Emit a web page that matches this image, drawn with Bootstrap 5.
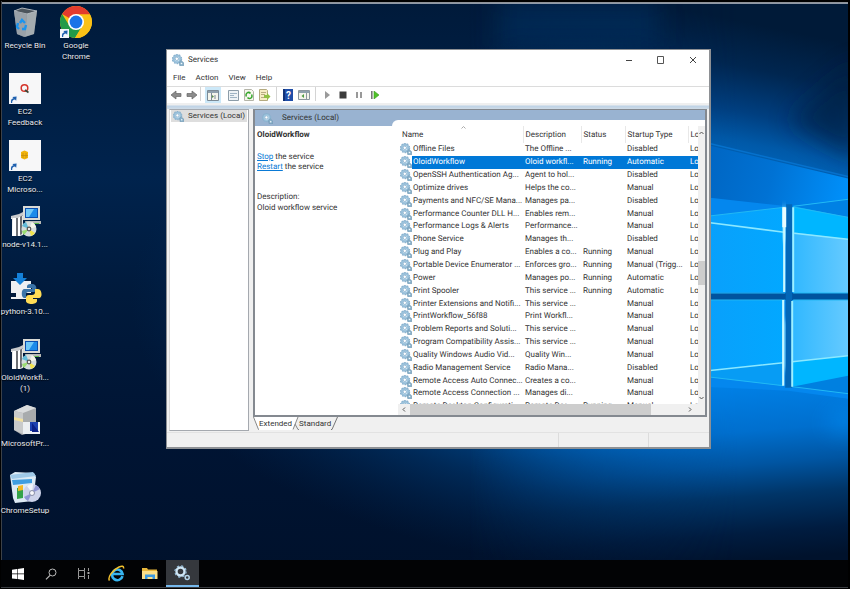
<!DOCTYPE html>
<html lang="en">
<head>
<meta charset="utf-8">
<meta name="viewport" content="width=device-width, initial-scale=1">
<title>Services</title>
<link rel="stylesheet" href="https://cdn.jsdelivr.net/npm/bootstrap@5.3.0/dist/css/bootstrap.min.css">
<style>
  html, body { height: 100%; }
  body { font-family: Roboto, "Open Sans", sans-serif; font-size: 8px; line-height: 12px; color: #333; background: #000; overflow: hidden; text-rendering: geometricPrecision; }
  svg { display: block; flex: none; }
  button { font: inherit; color: inherit; background: none; border: 0; padding: 0; }
  .screen { min-height: 100vh; border-style: solid; border-color: #000; border-width: 1px 2px 1px 1px; }
  .wallpaper { inset: 0; width: 100%; height: 100%; z-index: 0; }
  .desktop { z-index: 1; padding: 4px 0 24px; }
  .shortcut { width: 48px; flex: 1; display: flex; flex-direction: column; align-items: center; color: #e8ebf0; line-height: 11px; text-shadow: 0 1px 1px #000; text-align: center; white-space: nowrap; }
  .shortcut svg { width: 34px; height: 34px; margin-bottom: 1px; }
  .second { width: 54px; }
  .taskbar { background: #020305; height: 28px; border-bottom: 1px solid #3a3d42; z-index: 1; }
  .taskbar button { width: 33px; height: 27px; display: grid; place-items: center; }
  .taskbar button.running { background: #35383d; border-bottom: 2px solid #76b9ed; }
  .app { inset: 48px 137px 139px 165px; background: #f0f0f0; border: 1px solid #8d9094; border-width: 1px 2px 2px 1px; z-index: 2; }
  .titlebar { height: 20px; background: #fff; padding-left: 5px; }
  .titlebar .caption button { width: 32px; height: 20px; display: grid; place-items: center; }
  .menus { height: 16px; background: #fff; padding-left: 6px; gap: 10px; }
  .tools { height: 17px; background: #fff; border-top: 1px solid #dcdcdc; padding-left: 1px; }
  .tools button { height: 16px; width: 16px; display: grid; place-items: center; }
  .tools .on { background: #cce8f8; }
  .sep { width: 1px; height: 14px; background: #d4d4d4; margin: 0 3px; }
  .strip { height: 6px; background: linear-gradient(#efefef 0 2px, #bdd2e6 3px, #cfdbe6); }
  .body-area { padding: 0 2px 1px 2px; }
  .tree { width: 83px; background: #fff; border: 1px solid #a5a9af; border-left-color: #d8d8d8; padding: 0 1px; }
  .tree button { background: #dedede; height: 12px; padding: 0 2px; }
  .result { background: #fff; border: 1px solid #848990; border-width: 1px 2px 2px 2px; }
  .band { background: #99b3d1; height: 16px; }
  .band .title-cell { width: 137px; padding-left: 7px; gap: 9px; }
  .band .curve { background: #fff; margin-top: 10px; border-top-left-radius: 6px; }
  .detail { width: 143px; flex: none; padding: 3px 2px; line-height: 11px; }
  .detail a { color: #0a7ad6; text-decoration: underline; }
  .detail .actions { margin: 12px 0 19px; line-height: 10px; }
  .grid-wrap { overflow: hidden; padding-left: 2px; }
  .grid-table { table-layout: fixed; width: 100%; height: calc(100% + 9px); border-collapse: collapse; white-space: nowrap; line-height: 12px; }
  .grid-table th { font-weight: 400; height: 17px; padding: 0 2px; border-right: 1px solid #e8e8e8; position: relative; }
  .grid-table td { padding: 0 2px; overflow: hidden; }
  .grid-table td:last-child, .grid-table th:last-child { overflow: hidden; border-right: 0; }
  .grid-table td:first-child { padding: 0; }
  .grid-table td .lbl { flex: 1; padding-left: 1px; }
  .grid-table .picked td { background: #0078d7; color: #fff; }
  .grid-table .picked td:first-child { background: linear-gradient(90deg, #fff 12px, #0078d7 12px); }
  .sort { position: absolute; top: 0; left: 50%; }
  .c-name { width: 123px; } .c-desc { width: 58px; } .c-stat { width: 44px; } .c-start { width: 63px; }
  .bar-v { width: 11px; background: #f0f0f0; }
  .bar-v .thumb { height: 24px; background: #cdcdcd; }
  .above { flex: 125; } .below { flex: 109; }
  .bar-h { height: 11px; background: #f0f0f0; }
  .bar-h .thumb { flex: 238; background: #cdcdcd; } .bar-h .rest { flex: 34; }
  .views { height: 14px; }
  .views button { height: 13px; }
  .status { height: 15px; border-top: 1px solid #e2e2e2; }
  .status div { border-right: 1px solid #dcdcdc; width: 90px; }
  .status div:last-child { border: 0; width: 60px; }
  .shrink-y { min-height: 0; } .shrink-x { min-width: 0; }
</style>
</head>
<body>
<svg width="0" height="0" class="position-absolute" aria-hidden="true">
  <defs>
    <symbol id="gear" viewBox="0 0 12 12">
      <circle cx="5" cy="5" r="4.600" fill="none" stroke="#8fb6d2" stroke-width="1.200" stroke-dasharray="1.500 1.400"/>
      <circle cx="5" cy="5" r="3.300" fill="#e6f3fa" stroke="#9cc3dd" stroke-width="2"/>
      <circle cx="5" cy="5" r="4.300" fill="none" stroke="#7da6c4" stroke-width=".5"/>
      <circle cx="4.800" cy="4.800" r="1.700" fill="#fff" stroke="#6f9dc0" stroke-width=".7"/>
      <path d="M7.200 8.300L9 6.500l2.700 2.300v3H7.800z" fill="#8ab2cb" stroke="#6790ad" stroke-width=".6"/>
      <circle cx="9.500" cy="9.500" r=".8" fill="#f4f9fc"/>
    </symbol>
    <symbol id="installer" viewBox="0 0 34 34">
      <path d="M3 13h9l3-2v20l-3 1H4V15H3z" fill="#e5e5e5"/><path d="M5 14h3v18H4zM10 13l2-1v20h-2z" fill="#fff"/><path d="M8 14h2v18H8zM12 12l2-2v20l-2 1z" fill="#6d7075"/>
      <path d="M3 12l8-2 4-2v3l-5 3H3z" fill="#c7c9cc"/>
      <path d="M15 2h17v14H15z" fill="#d9dad5"/><path d="M17 4h13v10H17z" fill="#0a4fb0"/><path d="M18 5h11v8H18z" fill="#1b8bea"/><path d="M18 5h8l-5 8h-3z" fill="#6fc8f8"/>
      <path d="M17 17h16v3H18z" fill="#b8b9b5"/><path d="M24 19h7v1h-7z" fill="#58b848"/>
      <circle cx="21" cy="25" r="7.500" fill="#d5dcdc"/><path d="M21 25l-7-3a7.500 7.500 0 0 1 4-4z" fill="#62b9d8"/><path d="M21 25l3-7a7.500 7.500 0 0 1 4 5z" fill="#f4f4e8"/><path d="M21 25l6 4a7.500 7.500 0 0 1-4 3z" fill="#f1e34d"/><path d="M21 25l-5 6a7.500 7.500 0 0 1-2-4z" fill="#9bdc72"/>
      <circle cx="21" cy="25" r="2.400" fill="#555"/><circle cx="21" cy="25" r="1.200" fill="#eee"/>
    </symbol>
    <symbol id="linkarrow" viewBox="0 0 9 9"><path d="M0 0h9v9H0z" fill="#f3f6fa"/><path d="M2 8c-.4-3 .6-4.600 2.500-4.800L3.400 2 7.600 1.500 7.200 5.800 6 4.600C4 4.800 3 6 3.200 8z" fill="#1d5fae"/></symbol>
  </defs>
</svg>

<div class="screen position-relative d-flex flex-column">
  <svg class="wallpaper position-absolute" viewBox="0 0 850 589" preserveAspectRatio="none" aria-hidden="true">
    <defs>
      <linearGradient id="base" x1="0" y1="0" x2="0" y2="1"><stop offset="0" stop-color="#001a3a"/><stop offset=".3" stop-color="#00234d"/><stop offset=".5" stop-color="#001a3c"/><stop offset=".75" stop-color="#001433"/><stop offset="1" stop-color="#00112b"/></linearGradient>
      <radialGradient id="wide" gradientUnits="userSpaceOnUse" cx="0" cy="0" r="1" gradientTransform="translate(690 300) scale(560 275)"><stop offset="0" stop-color="#0089ec"/><stop offset=".4" stop-color="#0078da"/><stop offset=".55" stop-color="#0058a8" stop-opacity=".85"/><stop offset=".75" stop-color="#003a74" stop-opacity=".55"/><stop offset="1" stop-color="#002a58" stop-opacity="0"/></radialGradient>
      <linearGradient id="sky" gradientUnits="userSpaceOnUse" x1="790" y1="30" x2="760" y2="175"><stop offset="0" stop-color="#001a38"/><stop offset=".3" stop-color="#002650"/><stop offset=".6" stop-color="#003f80"/><stop offset=".8" stop-color="#0059a8"/><stop offset="1" stop-color="#0068c0"/></linearGradient>
      <linearGradient id="beam" gradientUnits="userSpaceOnUse" x1="700" y1="150" x2="850" y2="190"><stop offset="0" stop-color="#0064c0"/><stop offset=".5" stop-color="#0072d4"/><stop offset="1" stop-color="#0090fa"/></linearGradient>
      <linearGradient id="ground" gradientUnits="userSpaceOnUse" x1="760" y1="375" x2="775" y2="560"><stop offset="0" stop-color="#0083ea"/><stop offset=".3" stop-color="#006fce"/><stop offset=".48" stop-color="#0055a2"/><stop offset=".65" stop-color="#003568"/><stop offset=".85" stop-color="#001c40"/><stop offset="1" stop-color="#00122c"/></linearGradient>
      <linearGradient id="fadeX" gradientUnits="userSpaceOnUse" x1="470" y1="0" x2="740" y2="0"><stop offset="0" stop-color="#000"/><stop offset="1" stop-color="#fff"/></linearGradient>
      <mask id="edge" maskUnits="userSpaceOnUse" x="0" y="0" width="850" height="589"><path d="M0 0h850v589H0z" fill="url(#fadeX)"/></mask>
      <linearGradient id="paneR" x1="0" y1="0" x2="1" y2="0"><stop offset="0" stop-color="#30b8ff"/><stop offset="1" stop-color="#65caff"/></linearGradient>
      <linearGradient id="paneL" x1="0" y1="0" x2="1" y2="0"><stop offset="0" stop-color="#0a9ffb"/><stop offset="1" stop-color="#02a8ff"/></linearGradient>
      <filter id="soft" x="-40%" y="-40%" width="180%" height="180%"><feGaussianBlur stdDeviation="12"/></filter>
      <filter id="glow" x="-100%" y="-20%" width="300%" height="140%"><feGaussianBlur stdDeviation="3"/></filter>
    </defs>
    <path d="M0 0h850v589H0z" fill="url(#base)"/>
    <path d="M0 0h850v589H0z" fill="url(#wide)"/>
    <g mask="url(#edge)">
      <path d="M400 0h450v300H400z" fill="url(#sky)"/>
      <path d="M400 300h450v289H400z" fill="url(#ground)"/>
    </g>
    <path d="M860 60v100L790 120z" fill="#001c3c" opacity=".6" filter="url(#soft)"/>
    <path d="M500 0h160v45H500z" fill="#003064" opacity=".5" filter="url(#soft)"/>
    <path d="M690 140l160 38v160H690z" fill="url(#beam)"/>
    <path d="M690 138l160 38" stroke="#0a7fe0" stroke-width="1.500" opacity=".6"/>
    <path d="M680 194l110 12 60-7v200l-60-8-110-5z" fill="#0487ee"/>
    <path d="M700 217l86-10v85h-86zM700 300h85v86l-85-10z" fill="url(#paneL)"/>
    <path d="M795 206l55-7v94h-55zM794 300h56v94l-56-8z" fill="#00b6ff"/>
    <path d="M795 206l55-7v18z" fill="#0081e4"/><path d="M794 387l56-11v18z" fill="#0080e0"/>
    <path d="M795 232l55 7v54h-55zM794 300h56v56l-56 6z" fill="url(#paneR)"/>
    <path d="M700 372l85-9v23l-85-10z" fill="#079cf4"/>
    <path d="M680 293h170v7H680z" fill="#00539f"/><path d="M788 204h6v184h-7z" fill="#0367b8"/>
    <g fill="none" stroke="#8be8ff" stroke-width="1.600"><path d="M700 221l86 11M796 233l54 6M700 372l85-9M794 362l56-6"/></g>
    <g fill="none" stroke="#22b9f4"><path d="M700 217l86-10M795 206l55-7M700 376l85 10M794 387l56 7M711 293h76M711 300h76M795 293h55M795 300h55M796 207l54 10"/></g>
    <path d="M786 206v35M785 320v50" stroke="#9feeff" stroke-width="6" opacity=".7" filter="url(#glow)"/>
    <path d="M786 207v85M785 300v86" stroke="#c9f8ff" stroke-width="2.200"/><path d="M786 207v20" stroke="#e8fdff" stroke-width="4"/><path d="M795 207v85M794 301v86" stroke="#9df0ff" stroke-width="2"/>
    <path d="M855 395c0 20-20 25-30 28l30 12z" fill="#0096ff" opacity=".8" filter="url(#soft)"/>
    <path d="M0 0h850v2H0z" fill="#000"/><path d="M0 2h850" stroke="#bfc5cc" stroke-width="1.500"/>
    <path d="M.5 0v589" stroke="#3d4248"/>
  </svg>

  <main class="desktop d-flex flex-fill position-relative">
    <div class="d-flex flex-column">
      <button class="shortcut"><svg viewBox="0 0 34 34"><path d="M6 6l8-3 15 3-3 23-10 3-7-3z" fill="#7a8289"/><path d="M6 6l8-3 15 3-10 3z" fill="#4b545c" stroke="#c5ccd1" stroke-width=".8"/><path d="M6 6l13 3-2 23-8-3z" fill="#99a1a8"/><path d="M19 9l10-3-3 23-9 3z" fill="#b3b9be" opacity=".75"/><path d="M12 18l2-3 3 3M18 20l-1 4h-3M11 24l-2-2 1-4" fill="none" stroke="#1b94ee" stroke-width="2.400"/></svg>Recycle Bin</button>
      <button class="shortcut"><svg viewBox="0 0 34 34"><path d="M1 2h32v31H1z" fill="#f7f7f8"/><circle cx="16.500" cy="17" r="3.300" fill="none" stroke="#d4342a" stroke-width="1.500"/><path d="M17 19l3.500 2.500" stroke="#3a4a3a" stroke-width="1.600"/><use href="#linkarrow" x="1" y="24" width="9" height="9"/></svg>EC2<br>Feedback</button>
      <button class="shortcut"><svg viewBox="0 0 34 34"><path d="M1 2h32v31H1z" fill="#f7f7f8"/><path d="M13 14l3.500-1.500L20 14v6l-3.500 1.500L13 20z" fill="#f2b50c"/><path d="M15 15v5M18 15v5M13 17.500h7" stroke="#c78e08" stroke-width=".8"/><use href="#linkarrow" x="1" y="24" width="9" height="9"/></svg>EC2<br>Microso...</button>
      <button class="shortcut"><svg><use href="#installer"/></svg>node-v14.1...</button>
      <button class="shortcut"><svg viewBox="0 0 34 34"><path d="M3 10h20v12H3zM8 22h8v4h4v2H3v-2h5z" fill="#eef0f2"/><path d="M9 2h6v5h4l-7 7-7-7h4z" fill="#1480d8"/><path d="M24 13c-5 0-5 1-5 4h5v1h-8c-3 0-3 9 0 9h2v-4c0-1 1-2 2-2h6c3 0 4-8-2-8z" fill="#3a74a8"/><path d="M27 18v3c0 2-1 3-3 3h-3c-2 0-3 1-3 3v3c0 4 11 4 11 0v-2h-4v-1h6c4 0 3-9-1-9z" fill="#ffdc55"/></svg>python-3.10...</button>
      <button class="shortcut"><svg><use href="#installer"/></svg>OloidWorkfl...<br>(1)</button>
      <button class="shortcut"><svg viewBox="0 0 34 34"><path d="M6 8l13-6 9 3v23l-14 4-8-5z" fill="#a8abad"/><path d="M6 8l13-6 9 3-13 5z" fill="#dadcdd"/><path d="M6 8l9 2v21l-9-4z" fill="#c8cacb"/><path d="M6 14l9 2v3l-9-2z" fill="#f1e0a0"/><path d="M15 19h17v12H15z" fill="#eceff2"/><path d="M22 19h8v9h-8z" fill="#1c3faf"/><path d="M24 20l7 9h-7z" fill="#0a1f88"/></svg>MicrosoftPr...</button>
      <button class="shortcut"><svg viewBox="0 0 34 34"><path d="M2 5l5-3 19 1 2 4-3 24-18 2L5 28z" fill="#dceaf5"/><path d="M2 5l23-3 3 4-24 3z" fill="#9fc9e8"/><path d="M4 10l20-1v4L5 15z" fill="#3f9de0"/><path d="M9 18l6-1v11l-6 1z" fill="#35a34a"/><path d="M10 16l5-1v5l-5 1z" fill="#f3b823"/><circle cx="24" cy="23" r="9" fill="#cdd3ea"/><path d="M24 23l-8 4a9 9 0 0 0 4 4zM24 23l8-4a9 9 0 0 0-4-4z" fill="#8f95d4"/><path d="M24 23l-5-7a9 9 0 0 1 6-2z" fill="#f2f5fb"/><circle cx="24" cy="23" r="2.500" fill="#f8f8fb" stroke="#8a90a8"/></svg>ChromeSetup</button>
    </div>
    <div class="d-flex flex-column">
      <button class="shortcut second justify-content-start"><svg viewBox="0 0 34 34"><circle cx="17" cy="17" r="16" fill="#fbc116"/><path d="M17 17L3.100 9A16 16 0 0 1 31 9.500H17z" fill="#e33b2e"/><path d="M3.100 9A16 16 0 0 0 16 33l7.500-12.500L17 17 10 20z" fill="#229a48"/><path d="M17 9.500h14a16 16 0 0 1-15 23.500l7.500-12z" fill="#fbc116"/><circle cx="17" cy="17" r="8" fill="#fff"/><circle cx="17" cy="17" r="6.400" fill="#1a73e8"/><use href="#linkarrow" x="1" y="24" width="9" height="9"/></svg>Google<br>Chrome</button>
    </div>
  </main>

  <section class="app position-absolute d-flex flex-column" aria-label="Services">
    <header class="titlebar d-flex align-items-center">
      <svg width="12" height="12"><use href="#gear"/></svg><span class="ps-1 flex-fill">Services</span>
      <div class="caption d-flex">
        <button aria-label="Minimize"><svg width="8" height="8"><path d="M1 4.500h6" stroke="#444"/></svg></button>
        <button aria-label="Maximize"><svg width="8" height="8"><path d="M.5.5h6v7h-6z" fill="none" stroke="#555"/></svg></button>
        <button aria-label="Close"><svg width="8" height="8"><path d="M1 1l6 6M7 1L1 7" stroke="#444"/></svg></button>
      </div>
    </header>
    <nav class="menus d-flex align-items-center"><button>File</button><button>Action</button><button>View</button><button>Help</button></nav>
    <div class="tools d-flex align-items-start" role="toolbar">
      <button aria-label="Back"><svg width="12" height="10"><path d="M1 5l5-4v2.500h5v3H6V9z" fill="#8b8b8b" stroke="#666" stroke-width=".7"/></svg></button>
      <button aria-label="Forward"><svg width="12" height="10"><path d="M11 5L6 1v2.500H1v3h5V9z" fill="#8b8b8b" stroke="#666" stroke-width=".7"/></svg></button>
      <span class="sep mx-0"></span><span class="ps-1"></span>
      <button class="on" aria-label="Console tree"><svg width="12" height="11"><path d="M.5.5h11v10H.5z" fill="#f4f4ec" stroke="#7c8a95"/><path d="M1 1h10v2H1z" fill="#8fa0ad"/><path d="M4.500 3v7M8 5v4" stroke="#7c8a95"/><path d="M5 5l2 1.500L5 8z" fill="#5a8f4a"/></svg></button>
      <span class="ps-1"></span>
      <button aria-label="Properties"><svg width="11" height="11"><path d="M.5.5h10v10H.5z" fill="#eef3f6" stroke="#8c9ca8"/><path d="M2 3.500h7M2 5.500h4M2 7.500h7" stroke="#9fb4c4"/></svg></button>
      <button aria-label="Refresh"><svg width="10" height="12"><path d="M.5.500h7l2 2v9h-9z" fill="#f7f6ee" stroke="#b4b4a8"/><path d="M2.500 7.500a2.500 2.500 0 0 1 4-3M7.500 5.500a2.500 2.500 0 0 1-4 3" fill="none" stroke="#35a62c" stroke-width="1.500"/></svg></button>
      <button aria-label="Export"><svg width="12" height="12"><path d="M.5.5h7l1 1v10h-8z" fill="#f5edc4" stroke="#b4aa80"/><path d="M2 3.500h5M2 5.500h4M2 8.500h3" stroke="#b8ac80"/><path d="M5 6h3V4l3.500 3.500L8 11V9H5z" fill="#8fc043"/></svg></button>
      <span class="sep"></span>
      <button aria-label="Help"><svg width="10" height="12"><path d="M0 0h10v12H0z" fill="#1f4da8"/><path d="M0 0h2v12H0z" fill="#123277"/><text x="3" y="10" font-size="10" font-weight="700" fill="#fff">?</text></svg></button>
      <button aria-label="Action pane"><svg width="12" height="10"><path d="M.5.500h11v9H.5z" fill="#f4f4ec" stroke="#8c969e"/><path d="M1 1h10v2H1z" fill="#8fa0ad"/><path d="M8.500 3v6" stroke="#8c969e"/><path d="M6 4v4L3.500 6z" fill="#4f9c43"/></svg></button>
      <span class="sep"></span>
      <button aria-label="Start"><svg width="8" height="10"><path d="M2 1l5 4-5 4z" fill="#9a9a9a"/></svg></button>
      <button aria-label="Stop"><svg width="8" height="8"><path d="M.5.500h7v7h-7z" fill="#3c3c3c"/></svg></button>
      <button aria-label="Pause"><svg width="8" height="8"><path d="M1 1h2v6H1zM5 1h2v6H5z" fill="#999"/></svg></button>
      <button aria-label="Restart"><svg width="10" height="8"><path d="M1 0h1.600v8H1z" fill="#777"/><path d="M4 0l5 4-5 4z" fill="#4fc228" stroke="#3c9b1e" stroke-width=".6"/></svg></button>
    </div>
    <div class="strip"></div>
    <div class="body-area d-flex flex-fill shrink-y">
      <aside class="tree"><button class="d-flex align-items-center gap-1 text-nowrap"><svg width="11" height="11"><use href="#gear"/></svg>Services (Local)</button></aside>
      <div class="d-flex flex-column flex-fill ms-1 shrink-x">
        <div class="result flex-fill d-flex flex-column shrink-y">
          <div class="band d-flex">
            <div class="title-cell d-flex align-items-center"><svg width="11" height="11"><use href="#gear"/></svg>Services (Local)</div>
            <div class="curve flex-fill"></div>
          </div>
          <div class="d-flex flex-fill shrink-y">
            <div class="detail">
              <div class="fw-bold">OloidWorkflow</div>
              <div class="actions"><a href="#">Stop</a> the service<br><a href="#">Restart</a> the service</div>
              <div>Description:<br>Oloid workflow service</div>
            </div>
            <div class="d-flex flex-column flex-fill shrink-x">
              <div class="d-flex flex-fill shrink-y">
                <div class="grid-wrap flex-fill">
                  <table class="grid-table">
                    <colgroup><col class="c-name"><col class="c-desc"><col class="c-stat"><col class="c-start"><col></colgroup>
                    <thead><tr><th>Name<svg class="sort" width="5" height="3"><path d="M.5 2.500l2-2 2 2" fill="none" stroke="#aaa"/></svg></th><th>Description</th><th>Status</th><th>Startup Type</th><th>Log</th></tr></thead>
                    <tbody id="rows"></tbody>
                  </table>
                </div>
                <div class="bar-v d-flex flex-column align-items-center">
                  <svg width="7" height="12"><path d="M1.500 8l2-2 2 2" fill="none" stroke="#555"/></svg>
                  <div class="above"></div><div class="thumb w-100"></div><div class="below"></div>
                  <svg width="7" height="12"><path d="M1.500 5l2 2 2-2" fill="none" stroke="#555"/></svg>
                </div>
              </div>
              <div class="bar-h d-flex align-items-center">
                <svg width="12" height="7"><path d="M7 1.500l-2 2 2 2" fill="none" stroke="#555"/></svg>
                <div class="thumb h-100"></div><div class="rest"></div>
                <svg width="12" height="7" class="me-2"><path d="M4 1.500l2 2-2 2" fill="none" stroke="#555"/></svg>
              </div>
            </div>
          </div>
        </div>
        <div class="views d-flex">
          <svg width="6" height="13"><path d="M0 0h6v13z" fill="#fff"/><path d="M.5 0l5 12.500H6" fill="none" stroke="#888"/></svg>
          <button class="bg-white px-0">Extended</button>
          <svg width="7" height="13"><path d="M0 0h6L1 13H0z" fill="#fff"/><path d="M6 0L1 12.500M3 7l3 5.500h1" fill="none" stroke="#888"/></svg>
          <button>Standard</button>
          <svg width="7" height="13"><path d="M6.500 0L1 12.500H0" fill="none" stroke="#777"/></svg>
        </div>
      </div>
    </div>
    <footer class="status d-flex justify-content-end"><div></div><div></div><div></div></footer>
  </section>

  <footer class="taskbar d-flex position-relative">
    <button aria-label="Start"><svg width="12" height="12"><path d="M0 1.700L5 1v4.600H0zM5.600.9L12 0v5.600H5.600zM0 6.300h5v4.800l-5-.7zM5.600 6.300H12V12l-6.400-.9z" fill="#fff"/></svg></button>
    <button aria-label="Search"><svg width="12" height="12"><circle cx="7.500" cy="4.500" r="3.500" fill="none" stroke="#bbb"/><path d="M5 7.300L1 11.300" stroke="#bbb" stroke-width="1.200"/></svg></button>
    <button aria-label="Task view"><svg width="12" height="11"><path d="M.5 0v2.500h6V0M.5 11V8.500h6V11M.5 2.500v6M6.500 2.500v6M10.500 0v3M10.500 7v4" fill="none" stroke="#999"/><path d="M9.500 4h2v2h-2z" fill="#aaa"/></svg></button>
    <button aria-label="Internet Explorer"><svg width="17" height="17"><path d="M14.500 11.200A5.300 5.300 0 1 1 14.600 9H5" fill="none" stroke="#37b5f0" stroke-width="2.600"/><path d="M1.500 15.500C-.5 13 4 5 11 2c3-1.300 5-1 4.500 1.500" fill="none" stroke="#f2c12d" stroke-width="1.500"/></svg></button>
    <button aria-label="File Explorer"><svg width="16" height="13"><path d="M0 1h5l1 1.500h9V12H0z" fill="#e8b83c"/><path d="M0 4h15.500v8H0z" fill="#fbe08a"/><path d="M3 12V7.500h10V12h-2.500V10h-5v2z" fill="#3d9ae0"/></svg></button>
    <button aria-label="Services" class="running"><svg width="17" height="16"><circle cx="6.500" cy="6.500" r="4" fill="none" stroke="#cfe6f5" stroke-width="2.400"/><circle cx="6.500" cy="6.500" r="5.600" fill="none" stroke="#9cc3df" stroke-width="1.200" stroke-dasharray="2.200 2.200"/><circle cx="13.200" cy="12.500" r="2" fill="none" stroke="#b7d6ea" stroke-width="1.500"/></svg></button>
  </footer>
</div>

<script>
  const services = [
    ["Offline Files", "The Offline ...", "", "Disabled"],
    ["OloidWorkflow", "Oloid workfl...", "Running", "Automatic"],
    ["OpenSSH Authentication Ag...", "Agent to hol...", "", "Disabled"],
    ["Optimize drives", "Helps the co...", "", "Manual"],
    ["Payments and NFC/SE Mana...", "Manages pa...", "", "Disabled"],
    ["Performance Counter DLL H...", "Enables rem...", "", "Manual"],
    ["Performance Logs & Alerts", "Performance...", "", "Manual"],
    ["Phone Service", "Manages th...", "", "Disabled"],
    ["Plug and Play", "Enables a co...", "Running", "Manual"],
    ["Portable Device Enumerator ...", "Enforces gro...", "Running", "Manual (Trigg..."],
    ["Power", "Manages po...", "Running", "Automatic"],
    ["Print Spooler", "This service ...", "Running", "Automatic"],
    ["Printer Extensions and Notifi...", "This service ...", "", "Manual"],
    ["PrintWorkflow_56f88", "Print Workfl...", "", "Manual"],
    ["Problem Reports and Soluti...", "This service ...", "", "Manual"],
    ["Program Compatibility Assis...", "This service ...", "", "Manual"],
    ["Quality Windows Audio Vid...", "Quality Win...", "", "Manual"],
    ["Radio Management Service", "Radio Mana...", "", "Disabled"],
    ["Remote Access Auto Connec...", "Creates a co...", "", "Manual"],
    ["Remote Access Connection ...", "Manages di...", "", "Manual"],
    ["Remote Desktop Configurati...", "Remote Des...", "Running", "Manual"]
  ];
  const body = document.getElementById("rows");
  for (const [name, ...rest] of services) {
    const tr = body.insertRow();
    if (name === "OloidWorkflow") tr.className = "picked";
    tr.insertCell().innerHTML = '<div class="d-flex align-items-center"><svg width="12" height="12"><use href="#gear"/></svg><span class="lbl"></span></div>';
    tr.querySelector(".lbl").textContent = name;
    for (const value of [...rest, "Loc"]) tr.insertCell().textContent = value;
  }
</script>
<script src="https://cdn.jsdelivr.net/npm/bootstrap@5.3.0/dist/js/bootstrap.bundle.min.js"></script>
</body>
</html>
